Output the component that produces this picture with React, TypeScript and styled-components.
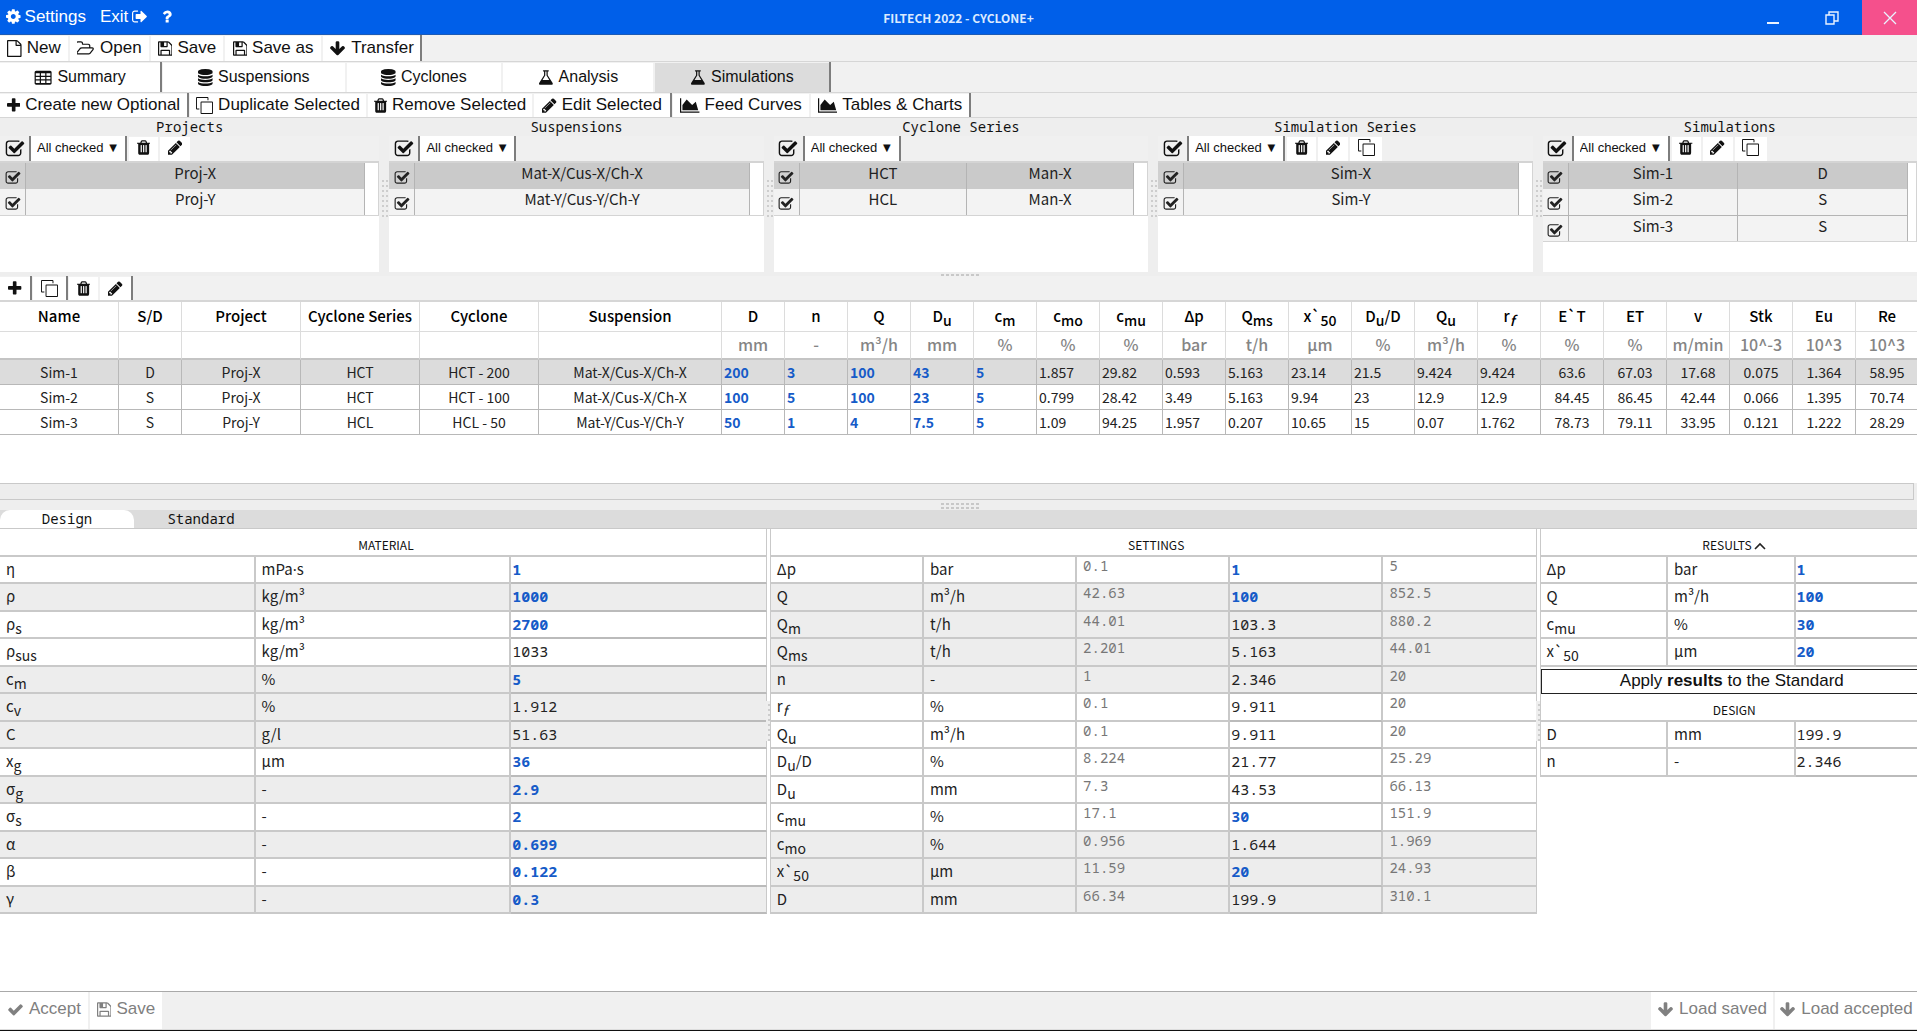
import React from "react";
import styled, { createGlobalStyle, css } from "styled-components";

const SANS = '"Noto Sans CJK SC", "Noto Sans", sans-serif';
const UI = '"Liberation Sans", Arial, sans-serif';
const MONO = '"Noto Sans Mono", "DejaVu Sans Mono", monospace';

const Global = createGlobalStyle`
  *, *::before, *::after { box-sizing: border-box; }
  body { margin: 0; background: #fff; color: #111; font-family: ${SANS}; font-size: 15px; }
  button, input, select { font: inherit; color: inherit; margin: 0; padding: 0; border: 0; background: none; border-radius: 0; }
  button { cursor: pointer; }
`;

/* ---------- icons ---------- */

type IconName =
  | "gear" | "exit" | "help" | "file" | "folder" | "save" | "down" | "table" | "database"
  | "flask" | "plus" | "copy" | "trash" | "pencil" | "chart" | "checked" | "tick";

const PATHS: Record<IconName, string> = {
  gear: "M1152 896q0-106-75-181t-181-75-181 75-75 181 75 181 181 75 181-75 75-181zm512-109v222q0 12-8 23t-20 13l-185 28q-19 54-39 91 35 50 107 138 10 12 10 25t-9 23q-27 37-99 108t-94 71q-12 0-26-9l-138-108q-44 23-91 38-16 136-29 186-7 28-36 28h-222q-14 0-24.5-8.5t-11.5-21.5l-28-184q-49-16-90-37l-141 107q-10 9-25 9-14 0-25-11-126-114-165-168-7-10-7-23 0-12 8-23 15-21 51-66.5t54-70.5q-27-50-41-99l-183-27q-13-2-21-12.5t-8-23.5v-222q0-12 8-23t19-13l186-28q14-46 39-92-40-57-107-138-10-12-10-24 0-10 9-23 26-36 98.5-107.5t94.5-71.5q13 0 26 10l138 107q44-23 91-38 16-136 29-186 7-28 36-28h222q14 0 24.5 8.5t11.5 21.5l28 184q49 16 90 37l142-107q9-9 24-9 13 0 25 10 129 119 165 170 7 8 7 22 0 12-8 23-15 21-51 66.5t-54 70.5q26 50 41 98l183 28q13 2 21 12.5t8 23.5z",
  exit: "M704 1440q0 4 1 20t.5 26.5-3 23.5-10 19.5-20.5 6.5h-320q-119 0-203.5-84.5t-84.5-203.5v-704q0-119 84.5-203.5t203.5-84.5h320q13 0 22.5 9.5t9.5 22.5q0 4 1 20t.5 26.5-3 23.5-10 19.5-20.5 6.5h-320q-66 0-113 47t-47 113v704q0 66 47 113t113 47h312l11.5 1 11.5 3 8 5.5 7 9 2 13.5zm928-544q0 26-19 45l-544 544q-19 19-45 19t-45-19-19-45v-288h-448q-26 0-45-19t-19-45v-384q0-26 19-45t45-19h448v-288q0-26 19-45t45-19 45 19l544 544q19 19 19 45z",
  help: "M1088 1256v240q0 16-12 28t-28 12h-240q-16 0-28-12t-12-28v-240q0-16 12-28t28-12h240q16 0 28 12t12 28zm316-600q0 54-15.5 101t-35 76.5-55 59.5-57.5 43.5-61 35.5q-41 23-68.5 65t-27.5 67q0 17-12 32.5t-28 15.5h-240q-15 0-25.5-18.5t-10.5-37.5v-45q0-83 65-156.5t143-108.5q59-27 84-56t25-76q0-42-46.5-74t-107.5-32q-65 0-108 29-35 25-107 115-13 16-31 16-12 0-25-8l-164-125q-13-10-15.5-25t5.5-28q160-266 464-266 80 0 161 31t146 83 106 127.5 41 158.5z",
  file: "M1596 380q28 28 48 76t20 88v1152q0 40-28 68t-68 28h-1344q-40 0-68-28t-28-68v-1600q0-40 28-68t68-28h896q40 0 88 20t76 48zm-444-244v376h376q-10-29-22-41l-313-313q-12-12-41-22zm384 1528v-1024h-416q-40 0-68-28t-28-68v-416h-768v1536h1280z",
  folder: "M1717 931q0-35-53-35h-1088q-40 0-85.5 21.5t-71.5 52.5l-294 363q-18 24-18 40 0 35 53 35h1088q40 0 86-22t71-53l294-363q18-22 18-39zm-1141-163h768v-160q0-40-28-68t-68-28h-576q-40 0-68-28t-28-68v-64q0-40-28-68t-68-28h-320q-40 0-68 28t-28 68v853l256-315q44-53 116-87.5t140-34.5zm1269 163q0 62-46 120l-295 363q-43 53-116 87.5t-140 34.5h-1088q-92 0-158-66t-66-158v-960q0-92 66-158t158-66h320q92 0 158 66t66 158v32h544q92 0 158 66t66 158v160h192q54 0 99 24.5t67 70.5q15 32 15 68z",
  save: "M512 1536h768v-384h-768v384zm896 0h128v-896q0-14-10-38.5t-20-34.5l-281-281q-10-10-34-20t-39-10v416q0 40-28 68t-68 28h-576q-40 0-68-28t-28-68v-416h-128v1280h128v-416q0-40 28-68t68-28h832q40 0 68 28t28 68v416zm-384-928v-320q0-13-9.5-22.5t-22.5-9.5h-192q-13 0-22.5 9.5t-9.5 22.5v320q0 13 9.5 22.5t22.5 9.5h192q13 0 22.5-9.5t9.5-22.5zm640 32v928q0 40-28 68t-68 28h-1344q-40 0-68-28t-28-68v-1344q0-40 28-68t68-28h928q40 0 88 20t76 48l280 280q28 28 48 76t20 88z",
  down: "M1675 832q0 53-37 90l-651 652q-39 37-91 37-53 0-90-37l-651-652q-38-36-38-90 0-53 38-91l74-75q39-37 91-37 53 0 90 37l294 294v-704q0-52 38-90t90-38h128q52 0 90 38t38 90v704l294-294q37-37 90-37 52 0 91 37l75 75q37 39 37 91z",
  table: "M0 352q0-66 47-113t113-47h1472q66 0 113 47t47 113v1152q0 66-47 113t-113 47h-1472q-66 0-113-47t-47-113zM128 448v256h416v-256zM672 448v256h448v-256zM1248 448v256h416v-256zM128 832v256h416v-256zM672 832v256h448v-256zM1248 832v256h416v-256zM128 1216v256h416v-256zM672 1216v256h448v-256zM1248 1216v256h416v-256z",
  database: "M896 768q237 0 443-43t325-127v170q0 69-103 128t-280 93.5-385 34.5-385-34.5-280-93.5-103-128v-170q119 84 325 127t443 43zm0 768q237 0 443-43t325-127v170q0 69-103 128t-280 93.5-385 34.5-385-34.5-280-93.5-103-128v-170q119 84 325 127t443 43zm0-384q237 0 443-43t325-127v170q0 69-103 128t-280 93.5-385 34.5-385-34.5-280-93.5-103-128v-170q119 84 325 127t443 43zm0-1152q208 0 385 34.5t280 93.5 103 128v128q0 69-103 128t-280 93.5-385 34.5-385-34.5-280-93.5-103-128v-128q0-69 103-128t280-93.5 385-34.5z",
  flask: "M1591 1448q56 89 21.5 152.5t-140.5 63.5h-1152q-106 0-140.5-63.5t21.5-152.5l503-793v-399h-64q-26 0-45-19t-19-45 19-45 45-19h512q26 0 45 19t19 45-19 45-45 19h-64v399zm-779-725l-272 429h712l-272-429-20-31v-436h-128v436z",
  plus: "M1600 736v192q0 40-28 68t-68 28h-416v416q0 40-28 68t-68 28h-192q-40 0-68-28t-28-68v-416h-416q-40 0-68-28t-28-68v-192q0-40 28-68t68-28h416v-416q0-40 28-68t68-28h192q40 0 68 28t28 68v416h416q40 0 68 28t28 68z",
  copy: "M96 0h1120q96 0 96 96v256h-100v-252h-1112v1112h252v100h-256q-96 0-96-96v-1120q0-96 96-96zM576 480h1120q96 0 96 96v1120q0 96-96 96h-1120q-96 0-96-96v-1120q0-96 96-96zM580 580v1112h1112v-1112z",
  trash: "M704 1376v-704q0-14-9-23t-23-9h-64q-14 0-23 9t-9 23v704q0 14 9 23t23 9h64q14 0 23-9t9-23zm256 0v-704q0-14-9-23t-23-9h-64q-14 0-23 9t-9 23v704q0 14 9 23t23 9h64q14 0 23-9t9-23zm256 0v-704q0-14-9-23t-23-9h-64q-14 0-23 9t-9 23v704q0 14 9 23t23 9h64q14 0 23-9t9-23zm-544-992h448l-48-117q-7-9-17-11h-317q-10 2-17 11zm928 32v64q0 14-9 23t-23 9h-96v948q0 83-47 143.5t-113 60.5h-832q-66 0-113-58.5t-47-141.5v-952h-96q-14 0-23-9t-9-23v-64q0-14 9-23t23-9h309l70-167q15-37 54-63t79-26h320q40 0 79 26t54 63l70 167h309q14 0 23 9t9 23z",
  pencil: "M491 1536l91-91-235-235-91 91v107h128v128h107zm523-928q0-22-22-22-10 0-17 7l-542 542q-7 7-7 17 0 22 22 22 10 0 17-7l542-542q7-7 7-17zm-54-192l416 416-832 832h-416v-416zm683 96q0 53-37 90l-166 166-416-416 166-165q36-38 90-38 53 0 91 38l235 234q37 39 37 91z",
  chart: "M2048 1536v128h-2048v-1536h128v1408h1920zm-384-1024l256 896h-1664v-576l448-576 576 576z",
  checked: "M1472 930v318q0 119-84.5 203.5t-203.5 84.5h-832q-119 0-203.5-84.5t-84.5-203.5v-832q0-119 84.5-203.5t203.5-84.5h832q63 0 117 25 15 7 18 23 3 17-9 29l-49 49q-10 10-23 10-3 0-9-2-23-6-45-6h-832q-66 0-113 47t-47 113v832q0 66 47 113t113 47h832q66 0 113-47t47-113v-254q0-13 9-22l64-64q10-10 23-10 6 0 12 3 20 8 20 29zm231-489l-814 814q-24 24-57 24t-57-24l-430-430q-24-24-24-57t24-57l110-110q24-24 57-24t57 24l263 263 647-647q24-24 57-24t57 24l110 110q24 24 24 57t-24 57z",
  tick: "M1671 566q0 40-28 68l-724 724-136 136q-28 28-68 28t-68-28l-136-136-362-362q-28-28-28-68t28-68l136-136q28-28 68-28t68 28l294 295 656-657q28-28 68-28t68 28l136 136q28 28 28 68z",
};

/* left edge and advance width of each glyph on the 1792-unit em */
const BOXES: Partial<Record<IconName, [number, number]>> = {
  gear: [128, 1536],
  exit: [64, 1664],
  help: [384, 1024],
  file: [128, 1536],
  folder: [64, 1856],
  save: [128, 1536],
  table: [-64, 1920],
  database: [128, 1536],
  flask: [64, 1664],
  plus: [192, 1408],
  trash: [192, 1408],
  pencil: [128, 1536],
  chart: [0, 2048],
};

const Glyph = styled.svg<{ $h: number }>`
  display: block;
  flex: none;
  width: auto;
  height: ${(p) => p.$h}px;
  fill: currentColor;
`;

function Icon({ name, size = 17 }: { name: IconName; size?: number }) {
  const [x, w] = BOXES[name] ?? [0, 1792];
  return (
    <Glyph $h={size} viewBox={`${x} 0 ${w} 1792`} aria-hidden="true">
      <path fillRule={name === "table" || name === "copy" ? "evenodd" : "nonzero"} d={PATHS[name]} />
    </Glyph>
  );
}

/* ---------- frame ---------- */

const Page = styled.div`
  display: flex;
  flex-direction: column;
  min-height: 100vh;
  overflow: hidden;
  background: #fff;
  border-bottom: 1px solid #111;
`;

const TitleBar = styled.header`
  display: grid;
  grid-template-columns: 1fr auto 1fr;
  height: 35px;
  background: #005fe9;
  border-bottom: 1px solid #1d5bb5;
  color: #fff;
`;

const TitleMenu = styled.nav`
  display: flex;
  align-items: center;
  gap: 14px;
  padding: 0 0 2px 6px;
`;

const MenuButton = styled.button`
  display: flex;
  align-items: center;
  gap: 4px;
  font: 17px/20px ${UI};
`;

const Title = styled.h1`
  margin: 0;
  align-self: center;
  padding-top: 1px;
  font: 700 12px/20px ${SANS};
  color: #dbeaff;
`;

const WindowButtons = styled.div`
  display: flex;
  justify-content: flex-end;
`;

const WindowButton = styled.button<{ $close?: boolean }>`
  display: grid;
  place-items: center;
  width: ${(p) => (p.$close ? 55 : 60)}px;
  height: 35px;
  background: ${(p) => (p.$close ? "#f5508c" : "transparent")};
  svg { display: block; fill: none; stroke: #eaf3ff; }
`;

/* ---------- button bars ---------- */

const Bar = styled.div<{ $h: number; $line?: number }>`
  display: flex;
  flex: none;
  height: ${(p) => p.$h}px;
  background: #f1f1f1;
  border-bottom: ${(p) => p.$line ?? 1}px solid #d6d6d6;
  padding-top: 1px;
`;

const BarButton = styled.button<{ $w: number; $on?: boolean; $small?: boolean }>`
  display: flex;
  align-items: center;
  justify-content: center;
  gap: 5px;
  flex: none;
  width: ${(p) => p.$w}px;
  margin-right: 2px;
  padding-bottom: 1px;
  background: ${(p) => (p.$on ? "#dcdcdc" : "#fff")};
  font: ${(p) => (p.$small ? 16 : 17)}px/20px ${UI};
  white-space: nowrap;
  color: #111;
`;

const Divider = styled.span`
  flex: none;
  width: 2px;
  margin: -1px 1px 0 -2px;
  background: #7d7d7d;
`;

type BarItem = { icon: IconName; label: string; w: number; on?: boolean; end?: boolean };

function ButtonBar({ items, height, name, small }: { items: BarItem[]; height: number; name: string; small?: boolean }) {
  return (
    <Bar $h={height} role="toolbar" aria-label={name}>
      {items.map((it) => (
        <React.Fragment key={it.label}>
          <BarButton type="button" $w={it.w} $on={it.on} $small={small}>
            <Icon name={it.icon} />
            {it.label}
          </BarButton>
          {it.end && <Divider />}
        </React.Fragment>
      ))}
    </Bar>
  );
}

const FILE_ITEMS: BarItem[] = [
  { icon: "file", label: "New", w: 68 },
  { icon: "folder", label: "Open", w: 79 },
  { icon: "save", label: "Save", w: 72 },
  { icon: "save", label: "Save as", w: 96 },
  { icon: "down", label: "Transfer", w: 97, end: true },
];
const VIEW_ITEMS: BarItem[] = [
  { icon: "table", label: "Summary", w: 160, end: true },
  { icon: "database", label: "Suspensions", w: 182 },
  { icon: "database", label: "Cyclones", w: 154 },
  { icon: "flask", label: "Analysis", w: 150 },
  { icon: "flask", label: "Simulations", w: 174, on: true, end: true },
];
const ACTION_ITEMS: BarItem[] = [
  { icon: "plus", label: "Create new Optional", w: 187, end: true },
  { icon: "copy", label: "Duplicate Selected", w: 176 },
  { icon: "trash", label: "Remove Selected", w: 164 },
  { icon: "pencil", label: "Edit Selected", w: 136, end: true },
  { icon: "chart", label: "Feed Curves", w: 136 },
  { icon: "chart", label: "Tables & Charts", w: 158, end: true },
];

/* ---------- browser panels ---------- */

const Browsers = styled.section`
  display: grid;
  grid-template-columns: calc(20% - 4px) repeat(4, 1fr);
  gap: 10px;
  height: 154px;
  flex: none;
  background: #eeeeee;
`;

const Browser = styled.section`
  position: relative;
  display: flex;
  flex-direction: column;
  min-width: 0;
  background: #fff;
`;

const BrowserTitle = styled.h2`
  margin: 0;
  height: 18px;
  background: #eeeeee;
  font: 14px/17px ${MONO};
  text-align: center;
`;

const BrowserTools = styled.div`
  display: flex;
  height: 25px;
  background: #f0f0f0;
`;

const Tick = styled.label<{ $w: number }>`
  position: relative;
  display: grid;
  place-items: center;
  width: ${(p) => p.$w}px;
  input { position: absolute; inset: 0; width: 100%; height: 100%; opacity: 0; }
`;

const Filter = styled.label`
  display: flex;
  align-items: center;
  width: 98px;
  padding: 0 8px 2px 6px;
  background: #fff;
  border: solid #7d7d7d;
  border-width: 0 2px;
  font: 13px/20px ${UI};
  select { flex: 1; appearance: none; outline: none; }
  span { font: 10px/20px "DejaVu Sans", sans-serif; }
`;

const ToolButton = styled.button<{ $w: number }>`
  display: grid;
  place-items: center;
  width: ${(p) => p.$w}px;
  margin: 1px 0 0 2px;
  padding-bottom: 3px;
  background: #fff;
`;

const List = styled.div<{ $pad: number }>`
  padding-right: ${(p) => p.$pad}px;
  border: solid #d4d4d4;
  border-width: 2px 1px 1px 0;
`;

const ListTable = styled.table`
  width: 100%;
  table-layout: fixed;
  border-collapse: separate;
  border-spacing: 0;
  td {
    height: 26px;
    padding: 0;
    border-right: 1px solid #b4b4b4;
    text-align: center;
    font-size: 15px;
    line-height: 20px;
    vertical-align: top;
    background: #f3f3f3;
    color: #222;
  }
  td:first-child { width: 26px; padding-top: 7px; }
  tr:first-child td { background: #cacaca; }
  tr:first-child td:first-child { background: #d0d0d0; }
  tr:nth-child(n + 3) td { border-top: 1px solid #b4b4b4; }
`;

const SideGrip = styled.span`
  position: absolute;
  left: -9px;
  top: 59px;
  width: 8px;
  height: 40px;
  background-image: linear-gradient(#eee 3px, transparent 3px), linear-gradient(90deg, #eee 2px, #cdcdcd 2px);
  background-size: 4px 5px;
`;

type BrowserData = { title: string; rows: string[][]; tools: IconName[]; pad?: number };

const TOOL_WIDTHS: Partial<Record<IconName, number>> = { trash: 29, pencil: 30, copy: 32 };

const BROWSERS: BrowserData[] = [
  { title: "Projects", rows: [["Proj-X"], ["Proj-Y"]], tools: ["trash", "pencil"] },
  { title: "Suspensions", rows: [["Mat-X/Cus-X/Ch-X"], ["Mat-Y/Cus-Y/Ch-Y"]], tools: [] },
  { title: "Cyclone Series", rows: [["HCT", "Man-X"], ["HCL", "Man-X"]], tools: [] },
  { title: "Simulation Series", rows: [["Sim-X"], ["Sim-Y"]], tools: ["trash", "pencil", "copy"] },
  { title: "Simulations", rows: [["Sim-1", "D"], ["Sim-2", "S"], ["Sim-3", "S"]], tools: ["trash", "pencil", "copy"], pad: 8 },
];

function BrowserPanel({ data, grip }: { data: BrowserData; grip: boolean }) {
  return (
    <Browser aria-label={data.title}>
      {grip && <SideGrip />}
      <BrowserTitle>{data.title}</BrowserTitle>
      <BrowserTools>
        <Tick $w={29}>
          <input type="checkbox" defaultChecked aria-label={`All ${data.title}`} />
          <Icon name="checked" size={20} />
        </Tick>
        <Filter>
          <select aria-label={`${data.title} filter`}>
            <option>All checked</option>
          </select>
          <span>▼</span>
        </Filter>
        {data.tools.map((t) => (
          <ToolButton key={t} type="button" aria-label={t} $w={TOOL_WIDTHS[t] ?? 30}>
            <Icon name={t} size={17} />
          </ToolButton>
        ))}
      </BrowserTools>
      <List $pad={data.pad ?? 13}>
        <ListTable>
          <tbody>
            {data.rows.map((r) => (
              <tr key={r[0]}>
                <td>
                  <Tick $w={25}>
                    <input type="checkbox" defaultChecked aria-label={r[0]} />
                    <Icon name="checked" size={16} />
                  </Tick>
                </td>
                {r.map((c) => (
                  <td key={c}>{c}</td>
                ))}
              </tr>
            ))}
          </tbody>
        </ListTable>
      </List>
    </Browser>
  );
}

/* ---------- simulations grid ---------- */

const Splitter = styled.div<{ $h: number }>`
  display: flex;
  justify-content: center;
  align-items: center;
  flex: none;
  height: ${(p) => p.$h}px;
  background: #eeeeee;
  &::before {
    content: "";
    width: 40px;
    height: ${(p) => Math.min(p.$h, 8)}px;
    background-image: linear-gradient(#eee 2px, transparent 2px), linear-gradient(90deg, #eee 2px, #c8c8c8 2px);
    background-size: 5px 4px;
  }
`;

const GridArea = styled.div`
  height: 181px;
  flex: none;
  overflow: hidden;
`;

const Grid = styled.table`
  width: 100%;
  table-layout: fixed;
  border-collapse: separate;
  border-spacing: 0;
  th, td { padding: 0; text-align: center; overflow: hidden; white-space: nowrap; }
  th { border-right: 1px solid #dcdcdc; border-bottom: 1px solid #dcdcdc; font-weight: 500; }
  td { height: 25px; border-right: 1px solid #b8b8b8; border-bottom: 1px solid #b8b8b8; font-size: 14px; line-height: 24px; color: #222; }
  thead tr:first-child th { height: 30px; font-size: 15px; line-height: 27px; padding-bottom: 2px; color: #000; }
  thead tr:last-child th { height: 28px; font-size: 16px; line-height: 24px; padding-bottom: 2px; color: #858585; border-bottom: 2px solid #c4c4c4; }
  tbody tr:first-child td { background: #dcdcdc; }
`;

const Sub = styled.sub`
  font-size: 14px;
  line-height: 0;
  vertical-align: -4px;
`;

const GridInput = styled.input<{ $key?: boolean }>`
  display: block;
  width: 100%;
  height: 24px;
  padding-left: 2px;
  font: ${(p) => (p.$key ? 700 : 400)} 14px/24px ${SANS};
  color: ${(p) => (p.$key ? "#165bc8" : "#222")};
  outline: none;
`;

type Sym = React.ReactNode;
const COLS: { id: string; head: Sym; unit: string; w: number; kind: "text" | "key" | "edit" }[] = [
  { id: "Name", head: "Name", unit: "", w: 119, kind: "text" },
  { id: "S/D", head: "S/D", unit: "", w: 63, kind: "text" },
  { id: "Project", head: "Project", unit: "", w: 119, kind: "text" },
  { id: "Cyclone Series", head: "Cyclone Series", unit: "", w: 119, kind: "text" },
  { id: "Cyclone", head: "Cyclone", unit: "", w: 119, kind: "text" },
  { id: "Suspension", head: "Suspension", unit: "", w: 183, kind: "text" },
  { id: "D", head: "D", unit: "mm", w: 63, kind: "key" },
  { id: "n", head: "n", unit: "-", w: 63, kind: "key" },
  { id: "Q", head: "Q", unit: "m³/h", w: 63, kind: "key" },
  { id: "Du", head: <>D<Sub>u</Sub></>, unit: "mm", w: 63, kind: "key" },
  { id: "cm", head: <>c<Sub>m</Sub></>, unit: "%", w: 63, kind: "key" },
  { id: "cmo", head: <>c<Sub>mo</Sub></>, unit: "%", w: 63, kind: "edit" },
  { id: "cmu", head: <>c<Sub>mu</Sub></>, unit: "%", w: 63, kind: "edit" },
  { id: "Δp", head: "Δp", unit: "bar", w: 63, kind: "edit" },
  { id: "Qms", head: <>Q<Sub>ms</Sub></>, unit: "t/h", w: 63, kind: "edit" },
  { id: "x50", head: <>x`<Sub>50</Sub></>, unit: "µm", w: 63, kind: "edit" },
  { id: "Du/D", head: <>D<Sub>u</Sub>/D</>, unit: "%", w: 63, kind: "edit" },
  { id: "Qu", head: <>Q<Sub>u</Sub></>, unit: "m³/h", w: 63, kind: "edit" },
  { id: "rf", head: <>r<Sub><i>f</i></Sub></>, unit: "%", w: 63, kind: "edit" },
  { id: "E`T", head: "E`T", unit: "%", w: 63, kind: "text" },
  { id: "ET", head: "ET", unit: "%", w: 63, kind: "text" },
  { id: "v", head: "v", unit: "m/min", w: 63, kind: "text" },
  { id: "Stk", head: "Stk", unit: "10^-3", w: 63, kind: "text" },
  { id: "Eu", head: "Eu", unit: "10^3", w: 63, kind: "text" },
  { id: "Re", head: "Re", unit: "10^3", w: 63, kind: "text" },
];

const SIMS = [
  ["Sim-1", "D", "Proj-X", "HCT", "HCT - 200", "Mat-X/Cus-X/Ch-X", "200", "3", "100", "43", "5", "1.857", "29.82", "0.593", "5.163", "23.14", "21.5", "9.424", "9.424", "63.6", "67.03", "17.68", "0.075", "1.364", "58.95"],
  ["Sim-2", "S", "Proj-X", "HCT", "HCT - 100", "Mat-X/Cus-X/Ch-X", "100", "5", "100", "23", "5", "0.799", "28.42", "3.49", "5.163", "9.94", "23", "12.9", "12.9", "84.45", "86.45", "42.44", "0.066", "1.395", "70.74"],
  ["Sim-3", "S", "Proj-Y", "HCL", "HCL - 50", "Mat-Y/Cus-Y/Ch-Y", "50", "1", "4", "7.5", "5", "1.09", "94.25", "1.957", "0.207", "10.65", "15", "0.07", "1.762", "78.73", "79.11", "33.95", "0.121", "1.222", "28.29"],
];

const ScrollTrack = styled.div`
  height: 17px;
  margin-right: 3px;
  background: #ededed;
  border: 1px solid #c9c9c9;
  border-left: 0;
`;

const ScrollBed = styled.div`
  background: #eeeeee;
  flex: none;
`;

/* ---------- design tabs and parameter tables ---------- */

const Tabs = styled.div`
  display: flex;
  flex: none;
  height: 19px;
  background: #dcdcdc;
  border-bottom: 1px solid #c9c9c9;
`;

const Tab = styled.button<{ $on?: boolean }>`
  width: 134px;
  background: ${(p) => (p.$on ? "#fff" : "transparent")};
  border-radius: 10px 10px 0 0;
  font: 14px/18px ${MONO};
`;

const Params = styled.main`
  display: grid;
  grid-template-columns: 4fr 4fr 2fr;
  gap: 3px;
  width: calc(100% + 6px);
  flex: 1;
  align-items: start;
`;

const ParamPanel = styled.section`
  position: relative;
  border-left: 1px solid #c9c9c9;
  &:first-child { border-left: 0; }
`;

const ParamGrip = styled.span`
  position: absolute;
  left: -5px;
  top: 172px;
  width: 4px;
  height: 40px;
  background-image: linear-gradient(#eee 3px, transparent 3px), linear-gradient(90deg, #eee 2px, #cdcdcd 2px);
  background-size: 4px 5px;
`;

const SectionTitle = styled.h2`
  margin: 0;
  height: 28px;
  padding: 4px 0 0 6px;
  border: solid #c9c9c9;
  border-width: 0 1px 2px 0;
  font: 400 12px/23px ${SANS};
  text-align: center;
  svg { display: inline-block; vertical-align: 0; }
`;

const ParamTable = styled.table`
  width: 100%;
  table-layout: fixed;
  border-collapse: separate;
  border-spacing: 0;
  tr { height: 27px; }
  tr:nth-child(even) { height: 28px; }
  td, th {
    padding: 0 0 0 6px;
    border: solid #c9c9c9;
    border-width: 0 2px 2px 0;
    font: 400 15px/23px ${SANS};
    text-align: left;
    vertical-align: top;
    white-space: nowrap;
    color: #222;
  }
  td:last-child { border-right-width: 1px; }
`;

const ParamRow = styled.tr<{ $grey?: boolean }>`
  background: ${(p) => (p.$grey ? "#ededed" : "#fff")};
`;

const ValueCell = styled.td`
  && { padding: 0; border-bottom-color: #bbb; }
`;

const LimitCell = styled.td`
  && { font: 14px/18px ${MONO}; color: #777; }
`;

const ValueInput = styled.input<{ $key: boolean }>`
  display: block;
  width: 100%;
  height: 25px;
  padding-left: 1px;
  font: ${(p) => (p.$key ? 700 : 400)} 15px/25px ${MONO};
  color: ${(p) => (p.$key ? "#165bc8" : "#222")};
  outline: none;
`;

/* the CJK face sets the middle dot full width */
const Dot = styled.span`
  font-family: "Noto Sans", sans-serif;
`;

type Param = { id: string; sym: Sym; unit: Sym; value: string; key?: boolean; grey?: boolean; min?: string; max?: string };

const MATERIAL: Param[] = [
  { id: "η", sym: "η", unit: <>mPa<Dot>·</Dot>s</>, value: "1", key: true },
  { id: "ρ", sym: "ρ", unit: "kg/m³", value: "1000", key: true, grey: true },
  { id: "ρs", sym: <>ρ<Sub>s</Sub></>, unit: "kg/m³", value: "2700", key: true },
  { id: "ρsus", sym: <>ρ<Sub>sus</Sub></>, unit: "kg/m³", value: "1033" },
  { id: "cm", sym: <>c<Sub>m</Sub></>, unit: "%", value: "5", key: true, grey: true },
  { id: "cv", sym: <>c<Sub>v</Sub></>, unit: "%", value: "1.912", grey: true },
  { id: "C", sym: "C", unit: "g/l", value: "51.63", grey: true },
  { id: "xg", sym: <>x<Sub>g</Sub></>, unit: "µm", value: "36", key: true },
  { id: "σg", sym: <>σ<Sub>g</Sub></>, unit: "-", value: "2.9", key: true, grey: true },
  { id: "σs", sym: <>σ<Sub>s</Sub></>, unit: "-", value: "2", key: true },
  { id: "α", sym: "α", unit: "-", value: "0.699", key: true, grey: true },
  { id: "β", sym: "β", unit: "-", value: "0.122", key: true },
  { id: "γ", sym: "γ", unit: "-", value: "0.3", key: true, grey: true },
];

const SETTINGS: Param[] = [
  { id: "Δp", sym: "Δp", unit: "bar", min: "0.1", value: "1", max: "5", key: true },
  { id: "Q", sym: "Q", unit: "m³/h", min: "42.63", value: "100", max: "852.5", key: true, grey: true },
  { id: "Qm", sym: <>Q<Sub>m</Sub></>, unit: "t/h", min: "44.01", value: "103.3", max: "880.2", grey: true },
  { id: "Qms", sym: <>Q<Sub>ms</Sub></>, unit: "t/h", min: "2.201", value: "5.163", max: "44.01", grey: true },
  { id: "n", sym: "n", unit: "-", min: "1", value: "2.346", max: "20", grey: true },
  { id: "rf", sym: <>r<Sub><i>f</i></Sub></>, unit: "%", min: "0.1", value: "9.911", max: "20" },
  { id: "Qu", sym: <>Q<Sub>u</Sub></>, unit: "m³/h", min: "0.1", value: "9.911", max: "20" },
  { id: "Du/D", sym: <>D<Sub>u</Sub>/D</>, unit: "%", min: "8.224", value: "21.77", max: "25.29" },
  { id: "Du", sym: <>D<Sub>u</Sub></>, unit: "mm", min: "7.3", value: "43.53", max: "66.13" },
  { id: "cmu", sym: <>c<Sub>mu</Sub></>, unit: "%", min: "17.1", value: "30", max: "151.9", key: true },
  { id: "cmo", sym: <>c<Sub>mo</Sub></>, unit: "%", min: "0.956", value: "1.644", max: "1.969", grey: true },
  { id: "x50", sym: <>x`<Sub>50</Sub></>, unit: "µm", min: "11.59", value: "20", max: "24.93", key: true, grey: true },
  { id: "D", sym: "D", unit: "mm", min: "66.34", value: "199.9", max: "310.1", grey: true },
];

const RESULTS: Param[] = [
  { id: "Δp", sym: "Δp", unit: "bar", value: "1", key: true },
  { id: "Q", sym: "Q", unit: "m³/h", value: "100", key: true },
  { id: "cmu", sym: <>c<Sub>mu</Sub></>, unit: "%", value: "30", key: true },
  { id: "x50", sym: <>x`<Sub>50</Sub></>, unit: "µm", value: "20", key: true },
];

const DESIGN: Param[] = [
  { id: "D", sym: "D", unit: "mm", value: "199.9" },
  { id: "n", sym: "n", unit: "-", value: "2.346" },
];

function Parameters({ rows }: { rows: Param[] }) {
  return (
    <ParamTable>
      <tbody>
        {rows.map((r) => (
          <ParamRow key={r.id} $grey={r.grey}>
            <th scope="row">{r.sym}</th>
            <td>{r.unit}</td>
            {r.min && <LimitCell>{r.min}</LimitCell>}
            <ValueCell>
              <ValueInput $key={!!r.key} defaultValue={r.value} aria-label={r.id} />
            </ValueCell>
            {r.max && <LimitCell>{r.max}</LimitCell>}
          </ParamRow>
        ))}
      </tbody>
    </ParamTable>
  );
}

const ApplyButton = styled.button`
  display: block;
  width: 100%;
  height: 25px;
  margin-top: 2px;
  padding-bottom: 2px;
  border: 1px solid #222;
  background: #fff;
  font: 17px/20px ${UI};
`;

/* ---------- footer ---------- */

const Footer = styled.footer`
  display: flex;
  flex: none;
  height: 39px;
  background: #f0f0f0;
  border-top: 1px solid #a9a9a9;
  border-bottom: 1px solid #ddd;
`;

const FootButton = styled(BarButton)<{ $right?: boolean }>`
  padding-bottom: 3px;
  color: #808080;
  ${(p) => p.$right && css`margin: 0 0 0 2px;`}
`;

const Spacer = styled.span`
  flex: 1;
`;

export default function App() {
  return (
    <Page>
      <Global />
      <TitleBar>
        <TitleMenu>
          <MenuButton type="button"><Icon name="gear" />Settings</MenuButton>
          <MenuButton type="button">Exit<Icon name="exit" /></MenuButton>
          <MenuButton type="button" aria-label="Help"><Icon name="help" /></MenuButton>
        </TitleMenu>
        <Title>FILTECH 2022 - CYCLONE+</Title>
        <WindowButtons>
          <WindowButton type="button" aria-label="Minimize">
            <svg width="13" height="15" viewBox="0 0 13 15"><path d="M1 13h12" strokeWidth="2" /></svg>
          </WindowButton>
          <WindowButton type="button" aria-label="Restore">
            <svg width="14" height="14" viewBox="0 0 14 14"><path d="M1 4h8v9h-8zM4 4V1h9v9H9" strokeWidth="1.4" /></svg>
          </WindowButton>
          <WindowButton type="button" aria-label="Close" $close>
            <svg width="14" height="14" viewBox="0 0 14 14"><path d="M1 1l12 12M13 1L1 13" strokeWidth="1.3" /></svg>
          </WindowButton>
        </WindowButtons>
      </TitleBar>

      <ButtonBar items={FILE_ITEMS} height={27} name="File" />
      <ButtonBar items={VIEW_ITEMS} height={31} name="Views" small />
      <ButtonBar items={ACTION_ITEMS} height={25} name="Actions" />

      <Browsers>
        {BROWSERS.map((b, i) => (
          <BrowserPanel key={b.title} data={b} grip={i > 0} />
        ))}
      </Browsers>
      <Splitter $h={4} />

      <Bar $h={26} $line={2} role="toolbar" aria-label="Simulation rows">
        <BarButton type="button" aria-label="Add" $w={30}><Icon name="plus" /></BarButton>
        <Divider />
        <BarButton type="button" aria-label="Duplicate" $w={33}><Icon name="copy" /></BarButton>
        <Divider />
        <BarButton type="button" aria-label="Remove" $w={29}><Icon name="trash" /></BarButton>
        <BarButton type="button" aria-label="Edit" $w={31}><Icon name="pencil" /></BarButton>
        <Divider />
      </Bar>
      <GridArea>
        <Grid>
          <colgroup>
            {COLS.map((c) => <col key={c.id} width={c.w} />)}
          </colgroup>
          <thead>
            <tr>{COLS.map((c) => <th key={c.id} scope="col">{c.head}</th>)}</tr>
            <tr>{COLS.map((c) => <th key={c.id}>{c.unit}</th>)}</tr>
          </thead>
          <tbody>
            {SIMS.map((s) => (
              <tr key={s[0]}>
                {s.map((v, i) => (
                  <td key={COLS[i].id}>
                    {COLS[i].kind === "text" ? v : (
                      <GridInput $key={COLS[i].kind === "key"} defaultValue={v} aria-label={`${s[0]} ${COLS[i].id}`} />
                    )}
                  </td>
                ))}
              </tr>
            ))}
          </tbody>
        </Grid>
      </GridArea>
      <ScrollBed><ScrollTrack /></ScrollBed>
      <Splitter $h={10} />

      <Tabs role="tablist">
        <Tab type="button" role="tab" aria-selected="true" $on>Design</Tab>
        <Tab type="button" role="tab" aria-selected="false">Standard</Tab>
      </Tabs>

      <Params>
        <ParamPanel>
          <SectionTitle>MATERIAL</SectionTitle>
          <Parameters rows={MATERIAL} />
        </ParamPanel>
        <ParamPanel>
          <ParamGrip />
          <SectionTitle>SETTINGS</SectionTitle>
          <Parameters rows={SETTINGS} />
        </ParamPanel>
        <ParamPanel>
          <ParamGrip />
          <SectionTitle>
            RESULTS{" "}
            <svg width="12" height="8" viewBox="0 0 12 8" fill="none" stroke="#222" strokeWidth="1.6"><path d="M1 7l5-5 5 5" /></svg>
          </SectionTitle>
          <Parameters rows={RESULTS} />
          <ApplyButton type="button">Apply <b>results</b> to the Standard</ApplyButton>
          <SectionTitle>DESIGN</SectionTitle>
          <Parameters rows={DESIGN} />
        </ParamPanel>
      </Params>

      <Footer>
        <FootButton type="button" $w={88}><Icon name="tick" />Accept</FootButton>
        <FootButton type="button" $w={72}><Icon name="save" />Save</FootButton>
        <Spacer />
        <FootButton type="button" $w={122} $right><Icon name="down" />Load saved</FootButton>
        <FootButton type="button" $w={142} $right><Icon name="down" />Load accepted</FootButton>
      </Footer>
    </Page>
  );
}
